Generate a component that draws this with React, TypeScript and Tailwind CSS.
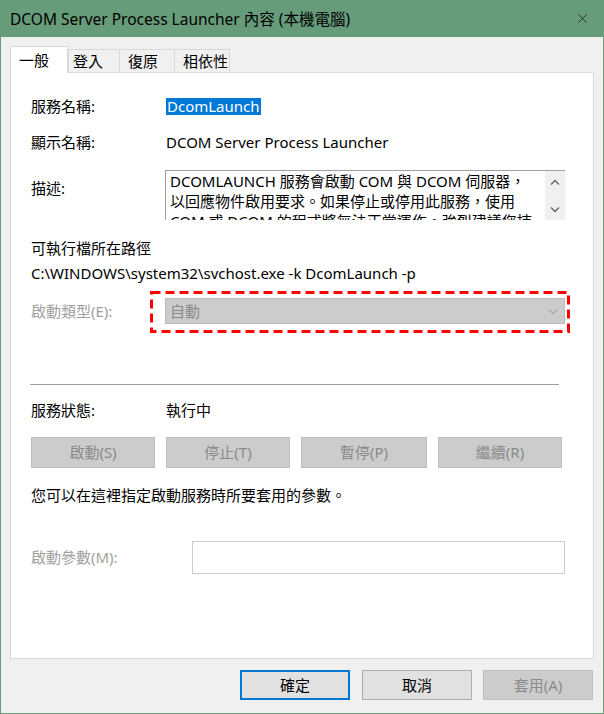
import { X } from 'lucide-react';

const font = "font-['Segoe_UI','Noto_Sans','Noto_Sans_CJK_TC',sans-serif]";

function Chevron({ dir, color }: { dir: 'up' | 'down'; color: string }) {
  const d = dir === 'up' ? 'M1 5.5 L5 1.5 L9 5.5' : 'M1 1.5 L5 5.5 L9 1.5';
  return (
    <svg width="10" height="7" viewBox="0 0 10 7">
      <path d={d} fill="none" stroke={color} strokeWidth="1.3" />
    </svg>
  );
}

function Tab({ label, active, w }: { label: string; active?: boolean; w: string }) {
  if (active) {
    return (
      <div className={`relative z-10 -mb-px h-[27px] ${w} border border-b-0 border-[#d9d9d9] bg-white pl-[8px] text-[15px] leading-[26px]`}>
        {label}
      </div>
    );
  }
  return (
    <div className={`h-[23px] ${w} -ml-px border border-b-0 border-[#d9d9d9] bg-[#f0f0f0] pl-[8px] text-[15px] leading-[23px]`}>
      {label}
    </div>
  );
}

export default function App() {
  const actionButtons = [
    { label: '啟動(S)', w: 'w-[124px]' },
    { label: '停止(T)', w: 'w-[124px]' },
    { label: '暫停(P)', w: 'w-[126px]' },
    { label: '繼續(R)', w: 'w-[124px]' },
  ];

  return (
    <div className={`${font} flex h-[714px] w-[604px] flex-col border border-t-0 border-[#669c79] bg-[#f0f0f0] text-black`}>
      {/* title bar */}
      <div className="flex h-[37px] shrink-0 items-center justify-between bg-[#669c79] pl-[9px] pr-[13px]">
        <span className="pt-[2px] text-[15.5px]">DCOM Server Process Launcher 內容 (本機電腦)</span>
        <X className="h-[15px] w-[15px] text-[#111]" strokeWidth={1.2} />
      </div>

      <div className="flex flex-col px-[9px] pt-[9px]">
        {/* tabs */}
        <div className="flex h-[26px] items-end">
          <Tab label="一般" active w="w-[58px]" />
          <div className="w-[1px]" />
          <Tab label="登入" w="w-[52px] !pl-[4px]" />
          <Tab label="復原" w="w-[56px]" />
          <Tab label="相依性" w="w-[56px]" />
        </div>

        {/* panel */}
        <div className="flex h-[587px] flex-col border border-[#d9d9d9] bg-white pl-[20px] text-[15px]">
          <div className="mt-[23px] flex h-[20px] items-center">
            <span className="w-[135px]">服務名稱:</span>
            <span className="bg-[#0078d7] px-[1px] leading-[17px] text-white">DcomLaunch</span>
          </div>

          <div className="mt-[16px] flex h-[20px] items-center">
            <span className="w-[135px]">顯示名稱:</span>
            <span>DCOM Server Process Launcher</span>
          </div>

          <div className="mt-[18px] flex h-[50px]">
            <span className="mt-[7px] w-[134px]">描述:</span>
            <div className="flex h-[50px] w-[400px] overflow-hidden border-l border-t border-[#a0a0a0]">
              <div className="flex-1 overflow-hidden whitespace-nowrap pl-[4px] leading-[20px]">
                <div>DCOMLAUNCH 服務會啟動 COM 與 DCOM 伺服器，</div>
                <div>以回應物件啟用要求。如果停止或停用此服務，使用</div>
                <div>COM 或 DCOM 的程式將無法正常運作。強烈建議您持</div>
              </div>
              <div className="flex w-[20px] flex-col items-center bg-[#f0f0f0] pt-[8px]">
                <Chevron dir="up" color="#606060" />
                <div className="h-[20px]" />
                <Chevron dir="down" color="#606060" />
              </div>
            </div>
          </div>

          <div className="mt-[18px] h-[20px] leading-[20px]">可執行檔所在路徑</div>
          <div className="mt-[5px] h-[20px] leading-[20px]">C:\WINDOWS\system32\svchost.exe -k DcomLaunch -p</div>

          <div className="mt-[15px] flex h-[26px] items-center">
            <span className="w-[134px] text-[#a0a0a0]">啟動類型(E):</span>
            <div className="relative flex h-[26px] w-[400px] items-center justify-between border border-[#bcbcbc] bg-[#cccccc] pl-[4px] pr-[6px] text-[#8a8a8a]">
              <span>自動</span>
              <Chevron dir="down" color="#a8a8a8" />
              <svg className="pointer-events-none absolute -left-[16px] -top-[8px]" width="420" height="42" viewBox="0 0 420 42">
                <rect x="1.5" y="1.5" width="417" height="39" fill="none" stroke="#ff0000" strokeWidth="3" strokeDasharray="9 5" />
              </svg>
            </div>
          </div>

          <div className="-ml-px mt-[60px] h-px w-[529px] bg-[#a0a0a0]" />

          <div className="mt-[15px] flex h-[20px] items-center">
            <span className="w-[135px]">服務狀態:</span>
            <span>執行中</span>
          </div>

          <div className="mt-[17px] flex gap-[11px]">
            {actionButtons.map((b) => (
              <div key={b.label} className={`flex h-[31px] ${b.w} items-center justify-center border border-[#bfbfbf] bg-[#cccccc] text-[#8a8a8a]`}>
                {b.label}
              </div>
            ))}
          </div>

          <div className="mt-[17px] h-[20px] leading-[20px]">您可以在這裡指定啟動服務時所要套用的參數。</div>

          <div className="mt-[36px] flex h-[33px] items-center">
            <span className="w-[161px] text-[#a0a0a0]">啟動參數(M):</span>
            <div className="h-[33px] w-[373px] border border-[#cccccc] bg-white" />
          </div>
        </div>
      </div>

      {/* dialog buttons */}
      <div className="mt-[11px] flex justify-end pr-[10px] text-[15px]">
        <div className="flex h-[30px] w-[110px] items-center justify-center border-2 border-[#0078d7] bg-[#e1e1e1]">確定</div>
        <div className="ml-[12px] flex h-[30px] w-[110px] items-center justify-center border border-[#adadad] bg-[#e1e1e1]">取消</div>
        <div className="ml-[11px] flex h-[30px] w-[110px] items-center justify-center border border-[#bfbfbf] bg-[#cccccc] text-[#8a8a8a]">套用(A)</div>
      </div>
    </div>
  );
}
